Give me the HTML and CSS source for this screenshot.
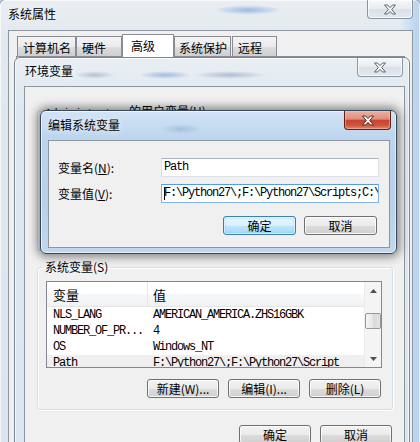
FILE: index.html
```html
<!DOCTYPE html>
<html lang="zh-CN">
<head>
<meta charset="utf-8">
<title>编辑系统变量</title>
<link rel="stylesheet" href="styles.css">
</head>
<body>
<div class="desktop">

  <section class="win win-inactive win1">
    <header class="titlebar">
      <span class="title">系统属性</span>
      <span class="close"><svg width="14" height="11" viewBox="0 0 14 11"><path d="M1.5 1h3l2.5 2.6L9.5 1h3L8.7 5.5l3.8 4.5h-3L7 7.4 4.5 10h-3l3.8-4.5z" fill="#f4f4f4" stroke="#5d6570" stroke-width="1" stroke-linejoin="round"/></svg></span>
    </header>
    <div class="client client1">
      <nav class="tabs">
        <span class="tab t1">计算机名</span>
        <span class="tab t2">硬件</span>
        <span class="tab t3 selected">高级</span>
        <span class="tab t4">系统保护</span>
        <span class="tab t5">远程</span>
      </nav>
      <div class="tabpanel"></div>
    </div>
  </section>

  <section class="win win-inactive win2">
    <header class="titlebar">
      <span class="title">环境变量</span>
      <span class="close"><svg width="14" height="11" viewBox="0 0 14 11"><path d="M1.5 1h3l2.5 2.6L9.5 1h3L8.7 5.5l3.8 4.5h-3L7 7.4 4.5 10h-3l3.8-4.5z" fill="#f4f4f4" stroke="#5d6570" stroke-width="1" stroke-linejoin="round"/></svg></span>
    </header>
    <div class="client client2">
      <fieldset class="group group-user">
        <legend><span class="mono">Administrator </span>的用户变量(U)</legend>
      </fieldset>
      <fieldset class="group group-sys">
        <legend>系统变量(S)</legend>
        <div class="list">
          <div class="list-body">
            <div class="list-head"><span class="hcell hc1">变量</span><span class="hcell hc2">值</span></div>
            <div class="row"><span class="cell c1 mono">NLS_LANG</span><span class="cell c2 mono">AMERICAN_AMERICA.ZHS16GBK</span></div>
            <div class="row"><span class="cell c1 mono">NUMBER_OF_PR...</span><span class="cell c2 mono">4</span></div>
            <div class="row"><span class="cell c1 mono">OS</span><span class="cell c2 mono">Windows_NT</span></div>
            <div class="row row-sel"><span class="cell c1 mono">Path</span><span class="cell c2 mono">F:\Python27\;F:\Python27\Script</span></div>
          </div>
          <div class="vscroll">
            <div class="sb-btn"><svg width="7" height="4" viewBox="0 0 7 4"><path d="M0 4L3.5 0L7 4z" fill="#505050"/></svg></div>
            <div class="sb-thumb"></div>
            <div class="sb-fill"></div>
            <div class="sb-btn"><svg width="7" height="4" viewBox="0 0 7 4"><path d="M0 0L3.5 4L7 0z" fill="#505050"/></svg></div>
          </div>
        </div>
        <div class="btnrow">
          <button class="btn">新建(W)...</button>
          <button class="btn">编辑(I)...</button>
          <button class="btn">删除(L)</button>
        </div>
      </fieldset>
      <div class="btnrow btnrow-bottom">
        <button class="btn">确定</button>
        <button class="btn">取消</button>
      </div>
    </div>
  </section>

  <section class="win dlg">
    <header class="titlebar">
      <span class="title">编辑系统变量</span>
      <span class="close close-active"><svg width="14" height="11" viewBox="0 0 14 11"><path d="M1.5 1h3l2.5 2.6L9.5 1h3L8.7 5.5l3.8 4.5h-3L7 7.4 4.5 10h-3l3.8-4.5z" fill="#ffffff" stroke="#4b2a26" stroke-width="1" stroke-linejoin="round"/></svg></span>
    </header>
    <div class="client client3">
      <label class="lbl">变量名(<u>N</u>):</label>
      <div class="textbox"><span class="mono">Path</span></div>
      <label class="lbl">变量值(<u>V</u>):</label>
      <div class="textbox focused"><span class="caret"></span><span class="mono">F:\Python27\;F:\Python27\Scripts;C:\Windows\system32</span></div>
      <div class="dlg-buttons">
        <button class="btn btn-default">确定</button>
        <button class="btn">取消</button>
      </div>
    </div>
  </section>

</div>
</body>
</html>
```

FILE: styles.css
```css
* { box-sizing: border-box; }

html, body {
  margin: 0;
  padding: 0;
}

body {
  width: 420px;
  height: 442px;
  overflow: hidden;
  background: #cfe0f1;
  font-family: "Noto Sans CJK SC", "Noto Sans", sans-serif;
  font-size: 12px;
  color: #000;
}

.desktop {
  position: relative;
  width: 420px;
  height: 442px;
  overflow: hidden;
}

.mono {
  font-family: "Liberation Mono", "Noto Sans CJK SC", monospace;
  font-size: 12px;
  letter-spacing: -1.2px;
  white-space: pre;
}

/* ---------- windows ---------- */
.win {
  position: absolute;
  display: flex;
  flex-direction: column;
  border: 1px solid #7a8896;
  border-radius: 6px 6px 0 0;
  box-shadow: inset 0 0 0 1px rgba(255, 255, 255, 0.65);
}

.win-inactive {
  background: linear-gradient(#e8edf2, #dfe7ef 40px, #dbe5ee);
}

.win1 {
  left: -1px;
  top: -1px;
  width: 422px;
  height: 470px;
  background:
    radial-gradient(ellipse 34px 5px at 248px 10px, rgba(60, 120, 210, 0.45), rgba(60, 120, 210, 0) 100%),
    linear-gradient(90deg, rgba(255,255,255,0) 400px, rgba(170, 205, 240, 0.7) 416px),
    linear-gradient(#eaeef2, #e1e8ef 40px, #dbe5ee);
}

.win2 {
  left: 14px;
  top: 57px;
  width: 396px;
  height: 420px;
  background:
    radial-gradient(ellipse 20px 4px at 80px 17px, rgba(90, 110, 140, 0.35), rgba(90, 110, 140, 0) 100%),
    radial-gradient(ellipse 26px 4px at 150px 17px, rgba(60, 110, 200, 0.4), rgba(60, 110, 200, 0) 100%),
    radial-gradient(ellipse 36px 4px at 215px 17px, rgba(70, 100, 160, 0.35), rgba(70, 100, 160, 0) 100%),
    linear-gradient(#e9eef3, #e0e8f0 40px, #dbe6f0);
}

.dlg {
  left: 40px;
  top: 110px;
  width: 357px;
  height: 144px;
  border-radius: 6px;
  border-color: #33465a;
  background:
    radial-gradient(ellipse 20px 5px at 140px 18px, rgba(70, 110, 170, 0.25), rgba(70, 110, 170, 0) 100%),
    linear-gradient(#d2e3f5, #bcd4ed 29px, #b8d0ea 60%, #c0d7ee);
  box-shadow:
    inset 0 0 0 1px rgba(255, 255, 255, 0.6),
    0 0 10px 3px rgba(0, 0, 0, 0.45);
}

.titlebar {
  flex: none;
  display: flex;
  justify-content: space-between;
  align-items: flex-start;
}

.title {
  line-height: 13px;
  white-space: nowrap;
  text-shadow: 0 0 6px rgba(255, 255, 255, 0.9);
}

.win1 .titlebar { height: 30px; }
.win1 .title { padding: 7px 0 0 8px; }
.win1 .close { margin-right: 7px; }

.win2 .titlebar { height: 28px; }
.win2 .title { padding: 6px 0 0 10px; }
.win2 .close { margin-right: 6px; }

.dlg .titlebar { height: 29px; }
.dlg .title { padding: 7px 0 0 7px; }
.dlg .close { margin-right: 5px; width: 47px; }

.close {
  width: 46px;
  height: 19px;
  display: flex;
  align-items: center;
  justify-content: center;
  border: 1px solid #8a96a3;
  border-top: none;
  border-radius: 0 0 4px 4px;
  background: linear-gradient(#f6f8fa, #e8ecf0 50%, #dae0e7 51%, #e4e9ee);
  box-shadow: inset 0 0 0 1px rgba(255, 255, 255, 0.7);
}

.close-active {
  border-color: #5e2016;
  background: linear-gradient(#eab1a4, #de8e7b 45%, #c7452e 52%, #cd5238 78%, #e08a6c);
  box-shadow: inset 0 0 0 1px rgba(255, 200, 190, 0.45);
}

/* ---------- client areas ---------- */
.client {
  flex: 1;
  background: #f0f0f0;
  border: 1px solid #8c96a1;
}

.client1 {
  margin: 0 7px 0 8px;
  padding: 3px 0 0 7px;
  display: flex;
  flex-direction: column;
}

.client2 {
  margin: 0 4px 0 9px;
  padding: 18px 11px 0 12px;
  display: flex;
  flex-direction: column;
}

.client3 {
  margin: 0 6px 5px 7px;
  padding: 17px 10px 0 9px;
  display: grid;
  grid-template-columns: 103px 218px;
  grid-auto-rows: 19px;
  row-gap: 7px;
  align-items: center;
  align-content: start;
}

/* ---------- tabs ---------- */
.tabs {
  display: flex;
  align-items: flex-end;
  height: 22px;
  margin-left: 1px;
  position: relative;
  z-index: 1;
}

.tab {
  height: 20px;
  padding: 5px 0 0 5px;
  line-height: 12px;
  white-space: nowrap;
  border: 1px solid #898c95;
  border-bottom: none;
  background: linear-gradient(#f4f4f4, #ebebeb 50%, #dddddd 51%, #cfcfcf);
}

.t1 { width: 59px; }
.t2 { width: 46px; }
.t3 { width: 52px; padding-left: 8px; }
.t4 { width: 57px; padding-left: 4px; }
.t5 { width: 45px; margin-left: 1px; }

.tab.selected {
  height: 23px;
  margin-bottom: -1px;
  background: #ffffff;
}

.tabpanel {
  flex: 1;
  margin-right: 7px;
  border: 1px solid #898c95;
  background: #ffffff;
}

/* ---------- group boxes ---------- */
.group {
  margin: 0;
  padding: 0 10px 0 8px;
  min-width: 0;
  border: 1px solid #d5dfe5;
  border-radius: 3px;
  box-shadow: inset 1px 1px 0 #ffffff, 1px 1px 0 #ffffff;
}

.group legend {
  margin-left: -3px;
  padding: 0 2px;
  line-height: 12px;
  height: 12px;
  white-space: nowrap;
}

.group legend .mono {
  font-size: 11px;
  letter-spacing: -0.6px;
}

.group-user {
  height: 146px;
  flex: none;
}

.group-sys {
  margin-top: 10px;
  height: 149px;
  flex: none;
}

/* ---------- list view ---------- */
.list {
  margin-top: 8px;
  height: 87px;
  border: 1px solid #828790;
  background: #ffffff;
  display: flex;
}

.list-body {
  flex: 1;
  overflow: hidden;
}

.list-head {
  display: grid;
  grid-template-columns: 101px 1fr;
  height: 25px;
  border-bottom: 1px solid #e5e5e5;
  background: linear-gradient(#ffffff, #ffffff 50%, #f7f8fa 51%, #f1f2f4);
}

.hcell {
  display: flex;
  align-items: center;
  font-size: 13px;
}

.hc1 {
  padding-left: 6px;
  border-right: 1px solid #e5e5e5;
}

.hc2 { padding-left: 5px; }

.row {
  display: grid;
  grid-template-columns: 101px 1fr;
  height: 16px;
  align-items: center;
}

.row-sel { background: #efefef; }

.cell { line-height: 16px; overflow: hidden; }
.c1 { padding-left: 6px; }
.c2 { padding-left: 5px; }

.vscroll {
  flex: none;
  width: 17px;
  display: flex;
  flex-direction: column;
  background: #f4f4f4;
  border-left: 1px solid #ececec;
}

.sb-btn {
  height: 17px;
  flex: none;
  display: flex;
  align-items: center;
  justify-content: center;
}

.sb-thumb {
  flex: none;
  margin-top: 14px;
  height: 16px;
  border: 1px solid #979797;
  border-radius: 2px;
  background: linear-gradient(90deg, #f5f5f5, #e6e6e6 50%, #d9d9d9 51%, #e3e3e3);
}

.sb-fill { flex: 1; }

/* ---------- buttons ---------- */
.btnrow {
  display: flex;
  justify-content: flex-end;
  gap: 9px;
  margin-top: 11px;
  margin-right: 1px;
}

.btnrow-bottom {
  margin-top: 15px;
}

.btn {
  width: 72px;
  height: 19px;
  padding: 0;
  font-family: "Noto Sans CJK SC", "Noto Sans", sans-serif;
  font-size: 12px;
  line-height: 17px;
  color: #000;
  border: 1px solid #707070;
  border-radius: 3px;
  background: linear-gradient(#f2f2f2, #ebebeb 50%, #dddddd 51%, #cfcfcf);
  box-shadow: inset 0 0 0 1px rgba(255, 255, 255, 0.8);
  white-space: nowrap;
}

.btn-default {
  border-color: #3c7fb1;
  background: linear-gradient(#eaf6fd, #d9f0fc 50%, #bee6fd 51%, #a7d9f5);
  box-shadow: inset 0 0 0 1px rgba(255, 255, 255, 0.6), inset 0 0 2px 1px rgba(72, 196, 242, 0.5);
}

/* ---------- edit dialog ---------- */
.lbl {
  line-height: 13px;
  white-space: nowrap;
}

.lbl u { text-decoration: underline; text-underline-offset: 1px; }

.textbox {
  height: 19px;
  padding-left: 2px;
  border: 1px solid #dbe1e7;
  border-top-color: #abb3bc;
  background: #ffffff;
  overflow: hidden;
  white-space: nowrap;
  line-height: 17px;
  display: flex;
  align-items: center;
}

.textbox.focused {
  border-color: #7eb4ea;
  border-top-color: #569de5;
}

.caret {
  flex: none;
  width: 1px;
  height: 13px;
  margin-right: -1px;
  background: #000;
}

.dlg-buttons {
  grid-column: 1 / 3;
  display: flex;
  justify-content: flex-end;
  gap: 8px;
  margin-top: 6px;
  margin-right: 2px;
  align-self: start;
}

.dlg-buttons .btn { width: 73px; }
```
